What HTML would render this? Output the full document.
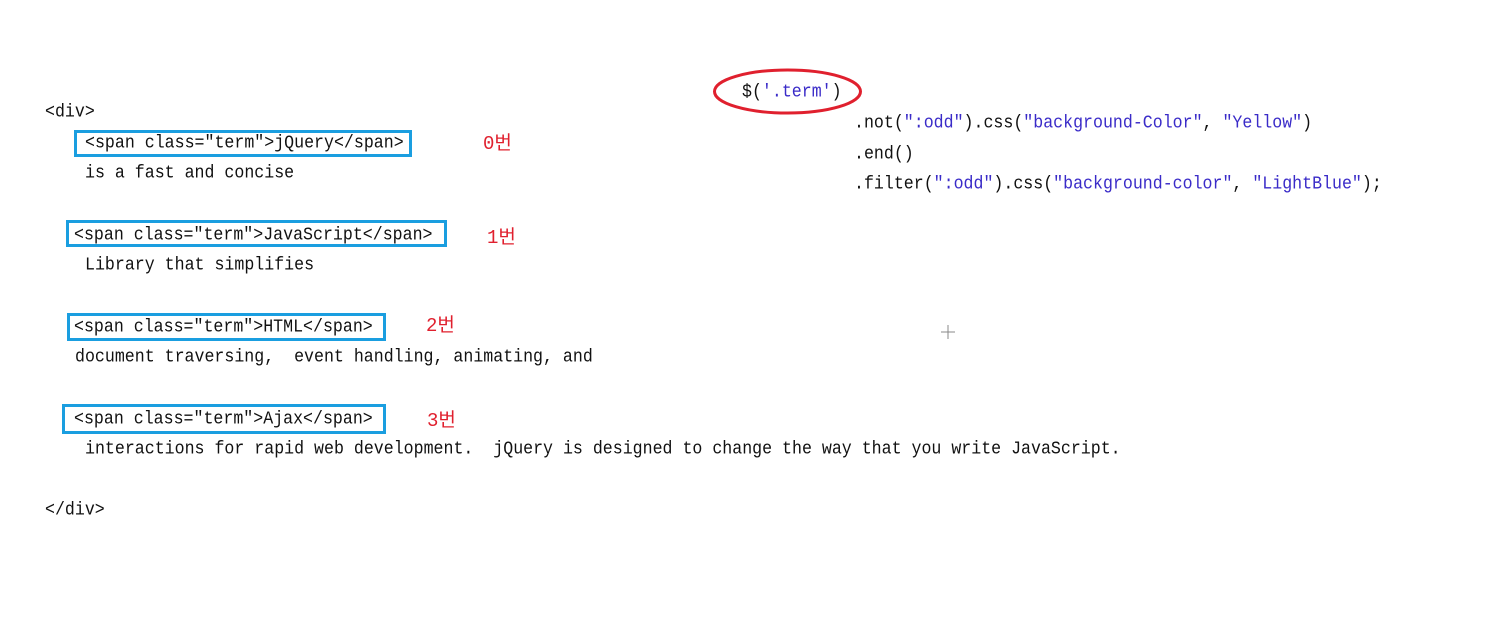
<!DOCTYPE html>
<html><head><meta charset="utf-8"><style>
body{margin:0;width:1491px;height:625px;background:#fff;position:relative;overflow:hidden}
.t{position:absolute;font-family:"Liberation Mono","Noto Sans CJK KR",monospace;font-size:16.6px;line-height:20px;color:#111;white-space:pre;transform:scaleY(1.14);transform-origin:0 50%}
.b{position:absolute;border:3px solid #1a9ee0;box-sizing:border-box}
.r{position:absolute;font-family:"Liberation Mono","Noto Sans CJK KR",sans-serif;font-size:19px;line-height:20px;color:#e0202e;white-space:pre}
.s{color:#3a2bc8}
</style></head><body>
<div class="t" style="left:45px;top:102px">&lt;div&gt;</div>
<div class="b" style="left:74px;top:130px;width:338px;height:27px"></div>
<div class="t" style="left:85px;top:133px">&lt;span class="term"&gt;jQuery&lt;/span&gt;</div>
<div class="t" style="left:85px;top:163px">is a fast and concise</div>
<div class="b" style="left:66px;top:220px;width:381px;height:27px"></div>
<div class="t" style="left:74px;top:225px">&lt;span class="term"&gt;JavaScript&lt;/span&gt;</div>
<div class="t" style="left:85px;top:255px">Library that simplifies</div>
<div class="b" style="left:67px;top:313px;width:319px;height:28px"></div>
<div class="t" style="left:74px;top:317px">&lt;span class="term"&gt;HTML&lt;/span&gt;</div>
<div class="t" style="left:75px;top:347px">document traversing,  event handling, animating, and</div>
<div class="b" style="left:62px;top:404px;width:324px;height:30px"></div>
<div class="t" style="left:74px;top:409px">&lt;span class="term"&gt;Ajax&lt;/span&gt;</div>
<div class="t" style="left:85px;top:439px">interactions for rapid web development.  jQuery is designed to change the way that you write JavaScript.</div>
<div class="t" style="left:45px;top:500px">&lt;/div&gt;</div>
<div class="r" style="left:483px;top:134px">0번</div>
<div class="r" style="left:487px;top:228px">1번</div>
<div class="r" style="left:426px;top:316px">2번</div>
<div class="r" style="left:427px;top:411px">3번</div>
<svg style="position:absolute;left:0;top:0" width="1491" height="625">
<ellipse cx="787.5" cy="91.5" rx="73" ry="21.5" fill="none" stroke="#e0202e" stroke-width="3"/>
<g stroke="#888" stroke-width="1"><line x1="941" y1="332" x2="955" y2="332"/><line x1="948" y1="325" x2="948" y2="339"/></g>
</svg>
<div class="t" style="left:742px;top:82px">$(<span class="s">'.term'</span>)</div>
<div class="t" style="left:854px;top:113px">.not(<span class="s">":odd"</span>).css(<span class="s">"background-Color"</span>, <span class="s">"Yellow"</span>)</div>
<div class="t" style="left:854px;top:144px">.end()</div>
<div class="t" style="left:854px;top:174px">.filter(<span class="s">":odd"</span>).css(<span class="s">"background-color"</span>, <span class="s">"LightBlue"</span>);</div>
</body></html>
